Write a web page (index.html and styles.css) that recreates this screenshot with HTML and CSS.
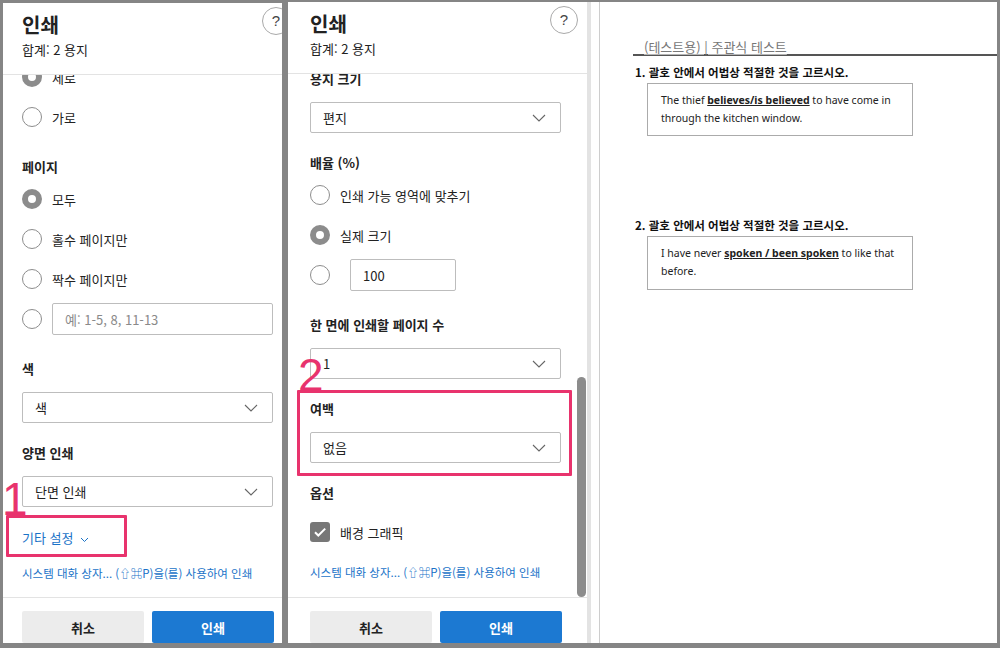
FILE: index.html
```html
<!DOCTYPE html>
<html lang="ko">
<head>
<meta charset="utf-8">
<title>인쇄</title>
<link rel="stylesheet" href="styles.css">
</head>
<body>
<div class="frame">
  <div class="win win-left">
    <section class="panel">
      <header class="phead">
        <div class="titles">
          <h1 class="title">인쇄</h1>
          <div class="sub">합계: 2 용지</div>
        </div>
        <div class="help">?</div>
      </header>
      <div class="pbody">
        <div class="scroll scroll-left">
          <div class="row"><span class="radio on"></span>세로</div>
          <div class="row"><span class="radio"></span>가로</div>
          <div class="label">페이지</div>
          <div class="rows">
            <div class="row"><span class="radio on"></span>모두</div>
            <div class="row"><span class="radio"></span>홀수 페이지만</div>
            <div class="row"><span class="radio"></span>짝수 페이지만</div>
            <div class="row"><span class="radio"></span><span class="input input-wide placeholder">예: 1-5, 8, 11-13</span></div>
          </div>
          <div class="label">색</div>
          <div class="select"><span>색</span><svg class="chev" width="14" height="8" viewBox="0 0 14 8"><path d="M1 1l6 6 6-6" fill="none" stroke="#666" stroke-width="1.1"/></svg></div>
          <div class="label">양면 인쇄</div>
          <div class="select"><span>단면 인쇄</span><svg class="chev" width="14" height="8" viewBox="0 0 14 8"><path d="M1 1l6 6 6-6" fill="none" stroke="#666" stroke-width="1.1"/></svg></div>
          <div class="more">기타 설정<svg class="mini" width="9" height="6" viewBox="0 0 9 6"><path d="M1 1l3.5 3.5L8 1" fill="none" stroke="#1a73c8" stroke-width="1"/></svg></div>
          <div class="syslink syslink-left">시스템 대화 상자... (⇧⌘P)을(를) 사용하여 인쇄</div>
        </div>
      </div>
      <footer class="pfoot">
        <button class="btn btn-cancel">취소</button>
        <button class="btn btn-print">인쇄</button>
      </footer>
    </section>
  </div>

  <div class="win win-mid">
    <section class="panel">
      <header class="phead">
        <div class="titles">
          <h1 class="title">인쇄</h1>
          <div class="sub">합계: 2 용지</div>
        </div>
        <div class="help">?</div>
      </header>
      <div class="pbody">
        <div class="scroll scroll-mid">
          <div class="label label-first">용지 크기</div>
          <div class="select"><span>편지</span><svg class="chev" width="14" height="8" viewBox="0 0 14 8"><path d="M1 1l6 6 6-6" fill="none" stroke="#666" stroke-width="1.1"/></svg></div>
          <div class="label">배율 (%)</div>
          <div class="rows">
            <div class="row"><span class="radio"></span>인쇄 가능 영역에 맞추기</div>
            <div class="row"><span class="radio on"></span>실제 크기</div>
            <div class="row"><span class="radio radio-far"></span><span class="input input-small">100</span></div>
          </div>
          <div class="label">한 면에 인쇄할 페이지 수</div>
          <div class="select"><span>1</span><svg class="chev" width="14" height="8" viewBox="0 0 14 8"><path d="M1 1l6 6 6-6" fill="none" stroke="#666" stroke-width="1.1"/></svg></div>
          <div class="label">여백</div>
          <div class="select"><span>없음</span><svg class="chev" width="14" height="8" viewBox="0 0 14 8"><path d="M1 1l6 6 6-6" fill="none" stroke="#666" stroke-width="1.1"/></svg></div>
          <div class="label">옵션</div>
          <div class="row row-check"><span class="check"><svg width="20" height="20" viewBox="0 0 20 20"><path d="M5 10.2l3.3 3.3L15.2 6.6" fill="none" stroke="#fff" stroke-width="2"/></svg></span>배경 그래픽</div>
          <div class="syslink syslink-mid">시스템 대화 상자... (⇧⌘P)을(를) 사용하여 인쇄</div>
        </div>
        <div class="scrollbar"></div>
      </div>
      <footer class="pfoot">
        <button class="btn btn-cancel">취소</button>
        <button class="btn btn-print">인쇄</button>
      </footer>
    </section>
  </div>

  <div class="preview">
    <div class="gutter"></div>
    <div class="page">
      <div class="doc-head"><span>(테스트용) | 주관식 테스트</span></div>
      <div class="q q1">1. 괄호 안에서 어법상 적절한 것을 고르시오.</div>
      <div class="qbox">The thief <b>believes/is believed</b> to have come in<br>through the kitchen window.</div>
      <div class="q q2">2. 괄호 안에서 어법상 적절한 것을 고르시오.</div>
      <div class="qbox qbox2">I have never <b>spoken / been spoken</b> to like that<br>before.</div>
    </div>
  </div>

  <div class="mark mark-1">1</div>
  <div class="mark-box mark-box-1"></div>
  <div class="mark mark-2">2</div>
  <div class="mark-box mark-box-2"></div>
</div>
</body>
</html>
```

FILE: styles.css
```css
* { box-sizing: border-box; }
html, body { margin: 0; padding: 0; }
body {
  width: 1000px;
  height: 648px;
  overflow: hidden;
  background: #858585;
  font-family: "Noto Sans CJK KR", "Noto Sans", sans-serif;
  color: #222;
}
.frame {
  position: relative;
  display: flex;
  align-items: flex-start;
  padding: 2px 3px 0 3px;
  height: 648px;
}
.win { flex: none; }
.win-left {
  width: 279px;
  height: 640px;
  margin-top: 1px;
  overflow: hidden;
}
.win-left .panel { margin-left: -3px; }
.win-mid {
  width: 299px;
  height: 641px;
  margin-left: 6px;
}
.panel {
  width: 299px;
  height: 100%;
  background: #fff;
  display: flex;
  flex-direction: column;
}
.phead {
  flex: none;
  height: 72px;
  border-bottom: 1px solid #e3e3e3;
  display: flex;
  justify-content: space-between;
  align-items: flex-start;
  padding: 4px 9px 0 22px;
}
.title {
  margin: 6px 0 0;
  font-size: 20px;
  line-height: 24px;
  font-weight: 700;
  color: #222;
}
.sub {
  margin-top: 3px;
  font-size: 13px;
  line-height: 20px;
  color: #222;
}
.help {
  width: 28px;
  height: 28px;
  border-radius: 50%;
  border: 1px solid #a9a9a9;
  font: 15px/26px "Liberation Sans", sans-serif;
  color: #444;
  text-align: center;
}
.pbody {
  flex: 1;
  overflow: hidden;
  padding: 0 26px 0 22px;
  position: relative;
}
.scroll-left { margin-top: -18px; }
.scroll-mid { margin-top: -5px; }
.row {
  display: flex;
  align-items: center;
  height: 40px;
  font-size: 13px;
  color: #222;
}
.rows { margin-top: 2px; }
.radio {
  flex: none;
  width: 20px;
  height: 20px;
  border-radius: 50%;
  border: 1px solid #8d8d8d;
  margin-right: 10px;
}
.radio.on { border: 6px solid #8c8c8c; }
.radio-far { margin-right: 20px; }
.label {
  margin-top: 20px;
  height: 20px;
  font-size: 13px;
  line-height: 20px;
  font-weight: 700;
  color: #222;
}
.label-first { margin-top: 0; }
.input {
  display: flex;
  align-items: center;
  height: 32px;
  border: 1px solid #bdbdbd;
  border-radius: 2px;
  padding: 0 12px;
  font-size: 13px;
}
.input-wide { width: 222px; }
.input-small { width: 106px; }
.placeholder { color: #8a8a8a; }
.select {
  margin-top: 13px;
  height: 31px;
  border: 1px solid #bdbdbd;
  border-radius: 2px;
  display: flex;
  align-items: center;
  justify-content: space-between;
  padding: 0 14px 0 12px;
  font-size: 13px;
  color: #222;
}
.chev { display: block; }
.more {
  margin-top: 21px;
  font-size: 13px;
  line-height: 20px;
  color: #1a73c8;
  display: flex;
  align-items: center;
}
.mini { margin-left: 7px; margin-top: 3px; }
.syslink {
  font-size: 11.5px;
  line-height: 20px;
  color: #1a73c8;
  white-space: nowrap;
}
.syslink-left { margin-top: 15px; }
.syslink-mid { margin-top: 10px; }
.row-check { margin-top: 9px; }
.check {
  flex: none;
  width: 20px;
  height: 20px;
  border-radius: 3px;
  background: #777;
  margin-right: 10px;
}
.check svg { display: block; }
.scrollbar {
  position: absolute;
  right: 1px;
  top: 303px;
  bottom: 0;
  width: 9px;
  border-radius: 5px;
  background: #8c8c8c;
}
.pfoot {
  flex: none;
  height: 46px;
  border-top: 1px solid #e3e3e3;
  padding: 13px 0 0 22px;
  display: flex;
  gap: 8px;
}
.btn {
  width: 122px;
  height: 32px;
  border: none;
  border-radius: 2px;
  font-family: "Noto Sans CJK KR", "Noto Sans", sans-serif;
  font-size: 13px;
  font-weight: 700;
  padding: 0;
}
.btn-cancel { background: #ececec; color: #222; }
.btn-print { background: #1c79d2; color: #fff; }

.preview {
  flex: 1;
  height: 641px;
  display: flex;
  background: #fff;
}
.gutter {
  flex: none;
  width: 13px;
  border-left: 4px solid #e3e3e3;
  border-right: 1px solid #cdcdcd;
}
.page {
  flex: 1;
  font-family: "Noto Sans", "Noto Sans CJK KR", sans-serif;
}
.doc-head {
  margin-left: 33px;
  padding: 38px 0 0 11px;
  border-bottom: 2px solid #555;
  font-family: "Noto Sans CJK KR", sans-serif;
  font-size: 13px;
  line-height: 14px;
  color: #777;
}
.doc-head span {
  text-decoration: underline;
  text-decoration-color: #b5b5b5;
  text-underline-offset: 2px;
}
.q {
  margin-left: 35px;
  font-family: "Noto Sans CJK KR", sans-serif;
  font-size: 11.5px;
  line-height: 16px;
  font-weight: 700;
  color: #111;
}
.q1 { margin-top: 8px; }
.q2 { margin-top: 81px; }
.qbox {
  margin: 3px 0 0 47px;
  width: 266px;
  height: 53px;
  border: 1px solid #ababab;
  padding: 7px 0 0 13px;
  font-size: 10.5px;
  line-height: 18px;
  color: #222;
}
.qbox b { text-decoration: underline; }
.qbox2 { height: 54px; }

.mark {
  position: absolute;
  font-family: "Liberation Sans", sans-serif;
  font-size: 46px;
  line-height: 46px;
  color: #e8336d;
}
.mark-1 { left: 2px; top: 476px; }
.mark-2 { left: 298px; top: 352px; }
.mark-box {
  position: absolute;
  border: 3px solid #e8336d;
  border-radius: 1px;
}
.mark-box-1 { left: 6px; top: 515px; width: 121px; height: 42px; }
.mark-box-2 { left: 297px; top: 390px; width: 275px; height: 86px; }
```
